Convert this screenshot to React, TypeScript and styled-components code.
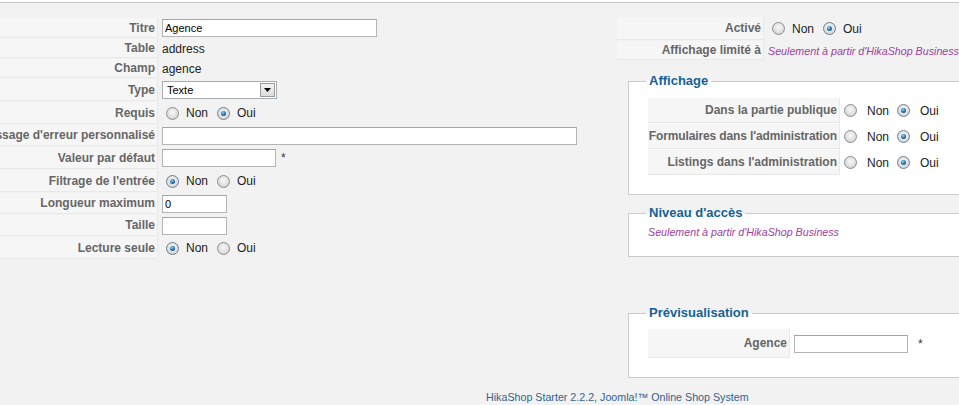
import React from "react";
import styled, { createGlobalStyle, css } from "styled-components";

const Global = createGlobalStyle`
  html, body { margin: 0; padding: 0; background: #fff; overflow: hidden; }
  body {
    font-family: "Liberation Sans", Arial, sans-serif;
    font-size: 12px;
    color: #222;
  }
`;

const Page = styled.div`
  margin-top: 2px;
  border-top: 1px solid #c8c8c8;
  background: #f2f2f2;
  min-height: 402px;
`;

const Columns = styled.div`
  display: flex;
  align-items: flex-start;
  padding-top: 15px;
`;

const LeftCol = styled.div`
  flex: 0 0 635px;
  margin-left: -18px;
  display: flex;
  flex-direction: column;
  gap: 1px;
`;

const RightCol = styled.div`
  flex: 0 0 360px;
  margin-top: -1px;
  display: flex;
  flex-direction: column;
`;

const FormTable = styled.div`
  display: flex;
  flex-direction: column;
  gap: 1px;
`;

const Row = styled.div<{ $h: number }>`
  display: flex;
  gap: 1px;
  height: ${(p) => p.$h}px;
`;

const Key = styled.div<{ $w: number; $tight?: boolean }>`
  flex: 0 0 ${(p) => p.$w}px;
  min-width: 0;
  box-sizing: border-box;
  background: #f6f6f6;
  border-bottom: 1px solid #e9e9e9;
  border-right: 1px solid #e9e9e9;
  color: #666;
  font-weight: bold;
  font-size: 12px;
  letter-spacing: ${(p) => (p.$tight ? "-0.12px" : "0")};
  display: flex;
  align-items: center;
  justify-content: flex-end;
  padding: 0 2px 0 0;
  white-space: nowrap;
`;

const Value = styled.div`
  display: flex;
  align-items: center;
  padding: 0 3px;
  white-space: nowrap;
  font-size: 12px;
  color: #222;
`;

const TextInput = styled.input<{ $w: number }>`
  box-sizing: border-box;
  width: ${(p) => p.$w}px;
  height: 18px;
  margin: 0;
  padding: 0 2px;
  border: 1px solid #b4b4b4;
  border-top-color: #a5a5a5;
  background: #fff;
  font-family: "Liberation Sans", Arial, sans-serif;
  font-size: 11px;
  color: #000;
  outline: none;
`;

const Star = styled.span<{ $gap: number }>`
  margin-left: ${(p) => p.$gap}px;
  color: #333;
  font-size: 12px;
`;

const SelectBox = styled.div`
  box-sizing: border-box;
  width: 115px;
  height: 18px;
  display: flex;
  align-items: stretch;
  border: 1px solid #a5acb2;
  background: #fff;
`;

const SelectText = styled.span`
  flex: 1;
  display: flex;
  align-items: center;
  padding-left: 4px;
  font-size: 11px;
  color: #000;
`;

const SelectButton = styled.span`
  flex: 0 0 15px;
  box-sizing: border-box;
  margin: 1px;
  border: 1px solid #9a9a9a;
  background: linear-gradient(#f4f4f4, #dcdcdc);
  display: flex;
  align-items: center;
  justify-content: center;
`;

const RadioDot = styled.span<{ $on: boolean }>`
  position: relative;
  flex: none;
  box-sizing: border-box;
  width: 13px;
  height: 13px;
  border-radius: 50%;
  border: 1px solid #8e8e8e;
  background: radial-gradient(circle at 50% 40%, #f8f8f8 0%, #e0e0e0 55%, #c4c4c4 100%);
  ${(p) =>
    p.$on &&
    css`
      border-color: #6f7f8c;
      &::after {
        content: "";
        position: absolute;
        left: 3px;
        top: 3px;
        width: 5px;
        height: 5px;
        border-radius: 50%;
        background: radial-gradient(circle at 40% 35%, #9bd6f7 0%, #2a7ab5 45%, #0b3a5e 100%);
      }
    `}
`;

const RadioLabel = styled.span<{ $gap: number; $after: number }>`
  margin-left: ${(p) => p.$gap}px;
  margin-right: ${(p) => p.$after}px;
  font-size: 12px;
  color: #222;
`;

const RadioLead = styled.span<{ $lead: number }>`
  display: inline-flex;
  align-items: center;
  margin-left: ${(p) => p.$lead}px;
`;

type RadioProps = { on: 0 | 1; lead: number; gap: number; sep: number };

const RadioPair = ({ on, lead, gap, sep }: RadioProps) => (
  <RadioLead $lead={lead}>
    <RadioDot $on={on === 0} />
    <RadioLabel $gap={gap} $after={sep}>Non</RadioLabel>
    <RadioDot $on={on === 1} />
    <RadioLabel $gap={gap} $after={0}>Oui</RadioLabel>
  </RadioLead>
);

const Paid = styled.span`
  font-size: 10.7px;
  font-style: italic;
  color: #a0409c;
`;

const Fieldset = styled.fieldset<{ $mt: number; $pt: number; $pb: number }>`
  margin: ${(p) => p.$mt}px 0 0 11px;
  padding: ${(p) => p.$pt}px 10px ${(p) => p.$pb}px 19px;
  border: 1px solid #cccccc;
  background: #fff;
  min-width: 0;
`;

const Legend = styled.legend`
  color: #146295;
  font-weight: bold;
  font-size: 13px;
  line-height: 16px;
  padding: 0 3px;
  margin-left: -2px;
`;

const PaidBlock = styled.div`
  line-height: 13px;
`;

const Footer = styled.div`
  margin-top: 12px;
  padding-left: 486px;
  font-size: 10.7px;
  line-height: 15px;
  color: #33628f;
  white-space: nowrap;
`;

const leftRadio = { lead: 4, gap: 7, sep: 9 };
const boxRadio = { lead: 0, gap: 10, sep: 8 };

export default function App() {
  return (
    <>
      <Global />
      <Page>
        <Columns>
          <LeftCol>
            <Row $h={20}>
              <Key $w={176}>Titre</Key>
              <Value><TextInput $w={215} defaultValue="Agence" /></Value>
            </Row>
            <Row $h={19}>
              <Key $w={176}>Table</Key>
              <Value>address</Value>
            </Row>
            <Row $h={19}>
              <Key $w={176}>Champ</Key>
              <Value>agence</Value>
            </Row>
            <Row $h={22}>
              <Key $w={176}>Type</Key>
              <Value>
                <SelectBox>
                  <SelectText>Texte</SelectText>
                  <SelectButton>
                    <svg width="7" height="4" viewBox="0 0 7 4">
                      <path d="M0 0h7L3.5 4z" fill="#000" />
                    </svg>
                  </SelectButton>
                </SelectBox>
              </Value>
            </Row>
            <Row $h={22}>
              <Key $w={176}>Requis</Key>
              <Value><RadioPair on={1} {...leftRadio} /></Value>
            </Row>
            <Row $h={21}>
              <Key $w={176}>Message d'erreur personnalisé</Key>
              <Value><TextInput $w={415} /></Value>
            </Row>
            <Row $h={22}>
              <Key $w={176}>Valeur par défaut</Key>
              <Value>
                <TextInput $w={114} />
                <Star $gap={5}>*</Star>
              </Value>
            </Row>
            <Row $h={22}>
              <Key $w={176}>Filtrage de l'entrée</Key>
              <Value><RadioPair on={0} {...leftRadio} /></Value>
            </Row>
            <Row $h={21}>
              <Key $w={176}>Longueur maximum</Key>
              <Value><TextInput $w={65} defaultValue="0" /></Value>
            </Row>
            <Row $h={21}>
              <Key $w={176}>Taille</Key>
              <Value><TextInput $w={65} /></Value>
            </Row>
            <Row $h={22}>
              <Key $w={176}>Lecture seule</Key>
              <Value><RadioPair on={0} {...leftRadio} /></Value>
            </Row>
          </LeftCol>

          <RightCol>
            <FormTable>
              <Row $h={23}>
                <Key $w={147}>Activé</Key>
                <Value><RadioPair on={1} {...leftRadio} /></Value>
              </Row>
              <Row $h={19}>
                <Key $w={147}>Affichage limité à</Key>
                <Value><Paid>Seulement à partir d'HikaShop Business</Paid></Value>
              </Row>
            </FormTable>

            <Fieldset $mt={13} $pt={9} $pb={19}>
              <Legend>Affichage</Legend>
              <FormTable>
                <Row $h={25}>
                  <Key $w={192}>Dans la partie publique</Key>
                  <Value><RadioPair on={1} {...boxRadio} /></Value>
                </Row>
                <Row $h={25}>
                  <Key $w={192} $tight>Formulaires dans l'administration</Key>
                  <Value><RadioPair on={1} {...boxRadio} /></Value>
                </Row>
                <Row $h={25}>
                  <Key $w={192}>Listings dans l'administration</Key>
                  <Value><RadioPair on={1} {...boxRadio} /></Value>
                </Row>
              </FormTable>
            </Fieldset>

            <Fieldset $mt={10} $pt={5} $pb={17}>
              <Legend>Niveau d'accès</Legend>
              <PaidBlock><Paid>Seulement à partir d'HikaShop Business</Paid></PaidBlock>
            </Fieldset>

            <Fieldset $mt={48} $pt={8} $pb={19}>
              <Legend>Prévisualisation</Legend>
              <FormTable>
                <Row $h={29}>
                  <Key $w={142}>Agence</Key>
                  <Value>
                    <TextInput $w={114} />
                    <Star $gap={10}>*</Star>
                  </Value>
                </Row>
              </FormTable>
            </Fieldset>
          </RightCol>
        </Columns>
        <Footer>HikaShop Starter 2.2.2, Joomla!™ Online Shop System</Footer>
      </Page>
    </>
  );
}
